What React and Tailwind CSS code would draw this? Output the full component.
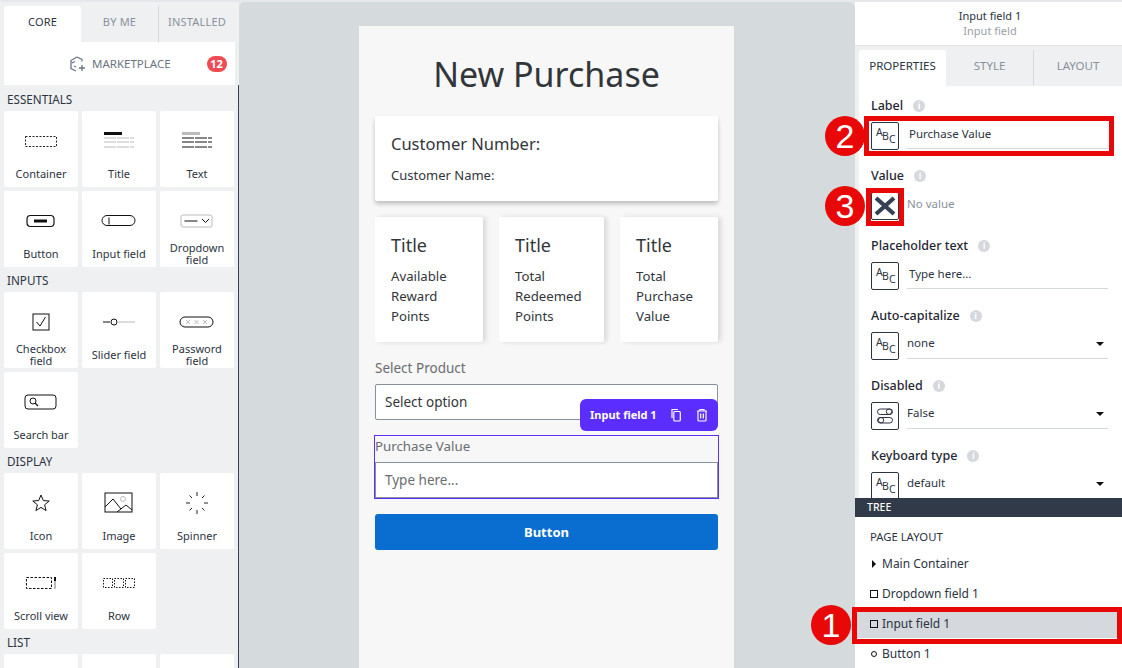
const Tile = ({ label, icon }) => (
  <div className="w-[74px] h-[76px] bg-white rounded-[2px] flex flex-col items-center shrink-0 overflow-hidden">
    <div className="h-[50px] w-full flex items-center justify-center pt-[10px]">{icon}</div>
    <div className="h-[26px] flex items-center justify-center text-center text-[11px] text-[#2c3440] leading-[12px]">
      {label}
    </div>
  </div>
);

const SectionLabel = ({ children, first }) => (
  <div className={`h-[25px] pl-[3px] pt-[6px] text-[11.7px] leading-[14px] text-[#2c3440] ${first ? "mt-[1px]" : ""}`}>{children}</div>
);

const Icons = {
  container: (
    <svg width="34" height="14"><rect x="1.5" y="2.5" width="31" height="10" fill="none" stroke="#222" strokeDasharray="2 1.5" /></svg>
  ),
  title: (
    <svg width="32" height="18">
      <rect x="1" y="0" width="18" height="3" fill="#111" />
      <path d="M1 6h30M1 10h30M1 15h30" stroke="#bbb" strokeDasharray="12 1" />
    </svg>
  ),
  text: (
    <svg width="32" height="18">
      <rect x="1" y="0" width="18" height="3" fill="#bbb" />
      <path d="M1 6h30M1 10h30M1 15h30" stroke="#111" strokeDasharray="12 1" />
    </svg>
  ),
  button: (
    <svg width="30" height="14"><rect x="1" y="1.5" width="27" height="11" rx="3.5" fill="none" stroke="#111" strokeWidth="1.2" /><rect x="8" y="5.5" width="13" height="3" fill="#111" /></svg>
  ),
  input: (
    <svg width="36" height="14"><rect x="1" y="1.5" width="33" height="10" rx="5" fill="none" stroke="#111" /><path d="M8 3.5v7" stroke="#111" /></svg>
  ),
  dropdown: (
    <svg width="34" height="14"><rect x="1" y="1" width="31" height="12" rx="2" fill="none" stroke="#bbb" /><path d="M4.5 7h13" stroke="#111" /><path d="M22 5l3.5 3.5L29 5" fill="none" stroke="#111" /></svg>
  ),
  checkbox: (
    <svg width="18" height="18"><rect x="1" y="1" width="16" height="16" fill="none" stroke="#111" /><path d="M4.5 9l3.5 4 5.5-9" fill="none" stroke="#111" /></svg>
  ),
  slider: (
    <svg width="34" height="10"><path d="M1 5h7" stroke="#111" /><circle cx="12" cy="5" r="3" fill="none" stroke="#111" /><path d="M15 5h18" stroke="#bbb" /></svg>
  ),
  password: (
    <svg width="36" height="14"><rect x="1" y="2" width="33" height="10" rx="5" fill="none" stroke="#111" /><path d="M7 5l4 4M11 5l-4 4M15.5 5l4 4M19.5 5l-4 4M24 5l4 4M28 5l-4 4" stroke="#bbb" /></svg>
  ),
  search: (
    <svg width="34" height="18"><rect x="1" y="2" width="31" height="14" rx="3" fill="none" stroke="#111" /><circle cx="9" cy="8" r="3" fill="none" stroke="#111" /><path d="M11 10l3 3" stroke="#111" strokeWidth="1.3" /></svg>
  ),
  star: (
    <svg width="20" height="20"><path d="M10 2l2.3 5.6 5.9.4-4.6 3.8 1.5 5.8-5.1-3.2-5.1 3.2 1.5-5.8L1.8 8l5.9-.4z" fill="none" stroke="#111" /></svg>
  ),
  image: (
    <svg width="30" height="22"><rect x="1" y="1" width="27" height="19" fill="none" stroke="#111" /><path d="M1 15l8-8 8 10M13 20l9-7 6 5" fill="none" stroke="#111" /><circle cx="19" cy="7" r="2.5" fill="none" stroke="#bbb" /></svg>
  ),
  spinner: (
    <svg width="24" height="24"><path d="M12 1v4M12 19v4M1 12h4M19 12h4M4.5 4.5l2.5 2.5M19.5 4.5L17 7M4.5 19.5L7 17M19.5 19.5L17 17" stroke="#222" /></svg>
  ),
  scroll: (
    <svg width="32" height="14"><rect x="1.5" y="1.5" width="25" height="11" fill="none" stroke="#111" strokeDasharray="2.5 1.5" /><path d="M30 1v12" stroke="#bbb" strokeWidth="2" /><path d="M30 1v4" stroke="#111" strokeWidth="2" /></svg>
  ),
  row: (
    <svg width="34" height="12"><rect x="1.5" y="1.5" width="9" height="9" fill="none" stroke="#111" strokeDasharray="1.5 1.5" /><rect x="12.5" y="1.5" width="9" height="9" fill="none" stroke="#111" strokeDasharray="1.5 1.5" /><rect x="23.5" y="1.5" width="9" height="9" fill="none" stroke="#111" strokeDasharray="1.5 1.5" /></svg>
  ),
};

const Abc = () => (
  <div className="relative w-[28px] h-[28px] border border-[#2c3440] rounded-[2px] bg-white shrink-0 text-[#2c3440] text-[10.5px] leading-none">
    <span className="absolute left-[4px] top-[4px]">A</span>
    <span className="absolute left-[10px] top-[8px]">B</span>
    <span className="absolute left-[17px] top-[11px]">C</span>
  </div>
);

const Info = () => (
  <span className="w-[12px] h-[12px] rounded-full bg-[#d5d8dc] text-white text-[9px] leading-[12px] text-center font-bold">i</span>
);

const FieldLabel = ({ children }) => (
  <div className="flex items-center gap-[10px] h-[18px] pt-[2px] text-[12.5px] text-[#1f2733] font-medium">
    {children}
    <Info />
  </div>
);

const Field = ({ label, value, caret, icon }) => (
  <div className="pr-[14px] shrink-0">
    <FieldLabel>{label}</FieldLabel>
    <div className="flex gap-[8px] mt-[8px] h-[28px]">
      {icon || <Abc />}
      <div className={`flex-1 h-[27px] border-b border-[#d5d8dc] flex justify-between items-center text-[11.5px] text-[#2c3440] ${caret ? "pb-[4px]" : "pb-[3px]"}`}>
        <span className={caret ? "" : "pl-[2px]"}>{value}</span>
        {caret && <span className="w-0 h-0 border-x-[4px] border-x-transparent border-t-[4px] border-t-[#111] mr-[4px] mt-[2px]"></span>}
      </div>
    </div>
  </div>
);

const Marker = ({ n, className }) => (
  <span className={`absolute w-[40px] h-[40px] rounded-full bg-[#e80808] text-white text-[34px] leading-[40px] text-center z-10 font-['Liberation_Sans',sans-serif] ${className}`}>{n}</span>
);

const KpiCard = ({ lines, w }) => (
  <div className={`${w} h-[125px] bg-white rounded-[2px] shadow-[3px_0_5px_rgba(0,0,0,0.12)] pl-[16px] pt-[16px]`}>
    <div className="text-[18px] leading-[24px] text-[#32363a]">Title</div>
    <div className="mt-[9px] text-[13.2px] leading-[20px] text-[#32363a]">
      {lines.map((l) => (
        <div key={l}>{l}</div>
      ))}
    </div>
  </div>
);

export default function App() {
  return (
    <div className="relative w-[1122px] h-[668px] overflow-hidden flex bg-[#e5e7ea] pt-[2px] font-['Noto_Sans','Liberation_Sans',sans-serif]">
      {/* left panel */}
      <div className="w-[239px] shrink-0 h-full flex flex-col bg-[#eef0f2] overflow-hidden">
        <div className="shrink-0 pl-[4px] pt-[4px]">
          <div className="flex h-[36px] text-[11px] tracking-[0.2px] w-[234px]">
            <div className="w-[77px] bg-white rounded-t-[3px] flex items-center justify-center text-[#2c3440] pb-[4px]">CORE</div>
            <div className="w-[78px] flex items-center justify-center text-[#8a919b] border-r border-[#d5d8dc] pb-[4px]">BY ME</div>
            <div className="w-[76px] flex items-center justify-center text-[#8a919b] pb-[4px]">INSTALLED</div>
          </div>
          <div className="h-[43px] w-[231px] bg-white flex items-center pl-[64px] text-[#6b7480] text-[11.5px]">
            <svg width="18" height="18" viewBox="0 0 18 18" fill="none" stroke="#6b7480" strokeWidth="1.3"><path d="M9 2l5 2.5v2M8 16l-5-2.5v-8L9 2M4 8l3-1.5M6 11l2 1" /><path d="M14 10v6M11 13h6" /></svg>
            <span className="ml-[6px]">MARKETPLACE</span>
            <span className="ml-[36px] w-[20px] h-[16px] rounded-full bg-[#ef4b55] text-white text-[11px] leading-[16px] text-center font-bold">12</span>
          </div>
        </div>
        <div className="flex-1 border-r border-[#354052] pl-[4px] overflow-hidden">
          <SectionLabel first>ESSENTIALS</SectionLabel>
          <div className="grid grid-cols-[74px_74px_74px] gap-[4px]">
            <Tile label="Container" icon={Icons.container} />
            <Tile label="Title" icon={Icons.title} />
            <Tile label="Text" icon={Icons.text} />
            <Tile label="Button" icon={Icons.button} />
            <Tile label="Input field" icon={Icons.input} />
            <Tile label={<>Dropdown<br />field</>} icon={Icons.dropdown} />
          </div>
          <SectionLabel>INPUTS</SectionLabel>
          <div className="grid grid-cols-[74px_74px_74px] gap-[4px]">
            <Tile label={<>Checkbox<br />field</>} icon={Icons.checkbox} />
            <Tile label="Slider field" icon={Icons.slider} />
            <Tile label={<>Password<br />field</>} icon={Icons.password} />
            <Tile label="Search bar" icon={Icons.search} />
          </div>
          <SectionLabel>DISPLAY</SectionLabel>
          <div className="grid grid-cols-[74px_74px_74px] gap-[4px]">
            <Tile label="Icon" icon={Icons.star} />
            <Tile label="Image" icon={Icons.image} />
            <Tile label="Spinner" icon={Icons.spinner} />
            <Tile label="Scroll view" icon={Icons.scroll} />
            <Tile label="Row" icon={Icons.row} />
          </div>
          <SectionLabel>LIST</SectionLabel>
          <div className="grid grid-cols-[74px_74px_74px] gap-[4px]">
            <Tile label="" />
            <Tile label="" />
            <Tile label="" />
          </div>
        </div>
      </div>

      {/* canvas */}
      <div className="flex-1 h-full bg-[#d5dadd] rounded-t-[6px] flex justify-center pt-[24px] pr-[1px] overflow-hidden">
        <div className="w-[375px] h-[700px] shrink-0 bg-[#f7f7f7] px-[16px]">
          <div className="h-[90px] flex items-center justify-center text-[34px] text-[#32363a] pt-[6px] -mx-[4px]">New Purchase</div>
          <div className="h-[85px] bg-white rounded-[2px] shadow-[0_3px_4px_rgba(0,0,0,0.22)] pl-[16px] pt-[16px]">
            <div className="text-[16.5px] leading-[24px] text-[#32363a]">Customer Number:</div>
            <div className="mt-[9px] text-[13px] leading-[20px] text-[#32363a]">Customer Name:</div>
          </div>
          <div className="mt-[16px] flex justify-between">
            <KpiCard w="w-[108px]" lines={["Available", "Reward", "Points"]} />
            <KpiCard w="w-[105px]" lines={["Total", "Redeemed", "Points"]} />
            <KpiCard w="w-[98px]" lines={["Total", "Purchase", "Value"]} />
          </div>
          <div className="mt-[16px] text-[13.5px] leading-[20px] text-[#6a6d70]">Select Product</div>
          <div className="relative mt-[6px] h-[36px] bg-white border border-[#89919a] rounded-[2px] pl-[9px] text-[13.5px] leading-[34px] text-[#32363a]">
            Select option
            <div className="absolute -right-[1px] top-[14px] w-[138px] h-[32px] bg-[#5b2dff] rounded-[6px] flex items-center pl-[10px] text-white text-[11px] font-bold z-10">
              Input field 1
              <svg className="ml-[13px]" width="12" height="14" viewBox="0 0 12 14" fill="none" stroke="white" strokeWidth="1.2"><path d="M2 10V1.5h6" /><rect x="3.8" y="3.5" width="6.5" height="9.5" rx="1" /></svg>
              <svg className="ml-[14px]" width="12" height="14" viewBox="0 0 12 14" fill="none" stroke="white" strokeWidth="1.2"><path d="M1 3h10M4 3V1.5h4V3M2 3v9a1 1 0 0 0 1 1h6a1 1 0 0 0 1-1V3M4.7 5.5v5M7.3 5.5v5" /></svg>
            </div>
          </div>
          <div className="mt-[15px] h-[64px] border border-[#5b2dff] -mx-[1px] flex flex-col">
            <div className="h-[26px] text-[13.3px] leading-[20px] text-[#6a6d70]">Purchase Value</div>
            <div className="flex-1 bg-white border border-[#89919a] pl-[9px] text-[13.5px] leading-[34px] text-[#6a6d70]">Type here...</div>
          </div>
          <div className="mt-[15px] h-[36px] pt-[1px] bg-[#0a6ed1] rounded-[3px] flex items-center justify-center text-white text-[13px] font-bold">Button</div>
        </div>
      </div>

      {/* right panel */}
      <div className="relative w-[267px] shrink-0 h-full bg-white flex flex-col overflow-hidden">
        <div className="h-[44px] shrink-0 border-b border-[#e1e3e6] text-center text-[11px] leading-[15px] pt-[6px] pl-[3px]">
          <div className="text-[#2c3440]">Input field 1</div>
          <div className="text-[#9a9fa6]">Input field</div>
        </div>
        <div className="h-[40px] shrink-0 pl-[4px] bg-[#eef0f2] flex text-[11.5px]">
          <div className="w-[87px] bg-white rounded-t-[3px] mt-[4px] flex items-center justify-center text-[#2c3440] pb-[4px]">PROPERTIES</div>
          <div className="w-[88px] mt-[4px] flex items-center justify-center text-[#8a919b] border-r border-[#d5d8dc] pb-[4px]">STYLE</div>
          <div className="flex-1 mt-[4px] flex items-center justify-center text-[#8a919b] pb-[4px]">LAYOUT</div>
        </div>
        <div className="h-[452px] shrink-0 border-l-4 border-[#eef0f2] pl-[12px] pt-[10px] flex flex-col gap-[16px] overflow-hidden">
          <Field label="Label" value="Purchase Value" />
          <div className="shrink-0">
            <FieldLabel>Value</FieldLabel>
            <div className="flex gap-[8px] mt-[8px] h-[28px]">
              <div className="w-[28px] h-[28px] border border-[#2c3440] rounded-[2px] flex items-center justify-center shrink-0">
                <svg width="22" height="20"><path d="M2 2l18 16M20 2L2 18" stroke="#354052" strokeWidth="4.2" /></svg>
              </div>
              <span className="text-[11.5px] leading-[24px] text-[#8a919b]">No value</span>
            </div>
          </div>
          <Field label="Placeholder text" value="Type here..." />
          <Field label="Auto-capitalize" value="none" caret />
          <Field
            label="Disabled"
            value="False"
            caret
            icon={
              <div className="w-[28px] h-[28px] border border-[#2c3440] rounded-[2px] flex items-center justify-center shrink-0">
                <svg width="18" height="18" fill="none" stroke="#2c3440"><rect x="1.5" y="2" width="15" height="5.5" rx="2.7" /><circle cx="13" cy="4.7" r="2.7" /><rect x="1.5" y="10.5" width="15" height="5.5" rx="2.7" /><circle cx="5" cy="13.2" r="2.7" /></svg>
              </div>
            }
          />
          <Field label="Keyboard type" value="default" caret />
        </div>
        <div className="absolute left-0 right-0 top-[496px] bottom-0 bg-white z-[1]">
          <div className="h-[19px] bg-[#303a48] text-white text-[10.5px] leading-[19px] pl-[12px] font-medium">TREE</div>
          <div className="pl-[15px] pt-[12px] text-[#2c3440]">
            <div className="text-[11.3px] leading-[15px]">PAGE LAYOUT</div>
            <div className="mt-[10px] flex items-center gap-[5px] h-[20px] text-[12px]">
              <span className="w-0 h-0 border-y-[4px] border-y-transparent border-l-[4px] border-l-[#111] ml-[2px] mr-[1px]"></span>Main Container
            </div>
            <div className="mt-[10px] flex items-center gap-[4px] h-[20px] text-[12px]">
              <span className="w-[8px] h-[8px] border border-[#111]"></span>Dropdown field 1
            </div>
            <div className="mt-[6px] -ml-[15px] pl-[15px] h-[28px] flex items-center gap-[4px] text-[12px] bg-[#d5d8dc]">
              <span className="w-[8px] h-[8px] border border-[#111]"></span>Input field 1
            </div>
            <div className="mt-[6px] flex items-center gap-[4px] h-[20px] text-[12px]">
              <span className="w-[6px] h-[6px] rounded-full border border-[#111] mx-[1px]"></span>Button 1
            </div>
          </div>
        </div>
      </div>

      {/* tutorial highlights and markers over the panels */}
      <div className="absolute left-[864px] top-[116px] w-[250px] h-[40px] border-[5px] border-[#e80808] z-[2]"></div>
      <div className="absolute left-[866px] top-[188px] w-[38px] h-[38px] border-[5px] border-[#e80808] z-[2]"></div>
      <div className="absolute left-[852px] top-[607px] w-[270px] h-[37px] border-[5px] border-[#e80808] z-[2]"></div>
      <Marker n="2" className="left-[825px] top-[116px]" />
      <Marker n="3" className="left-[825px] top-[186px]" />
      <Marker n="1" className="left-[811px] top-[605px]" />
    </div>
  );
}
